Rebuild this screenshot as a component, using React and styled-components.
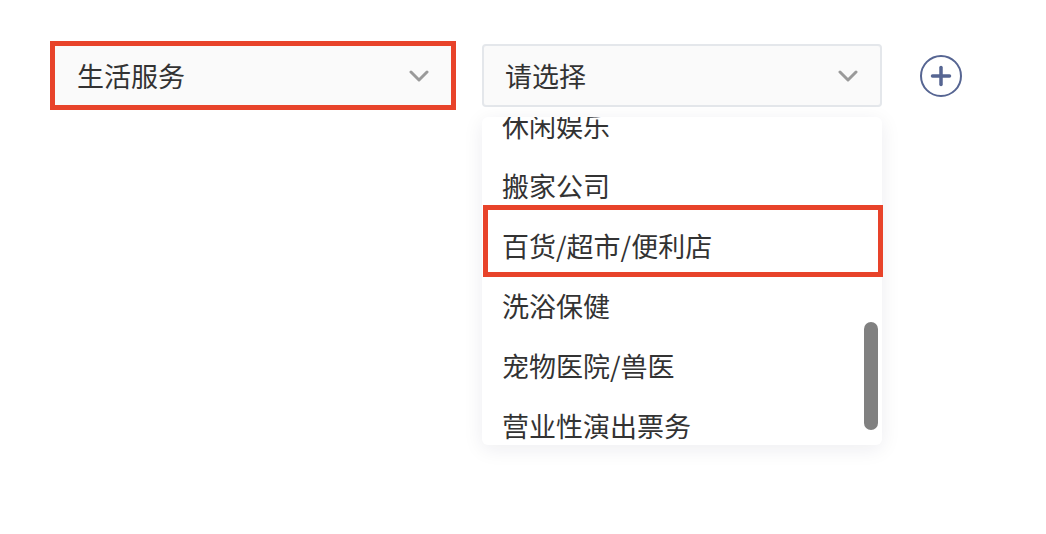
import React, { useLayoutEffect, useRef, useState } from 'react'
import styled, { createGlobalStyle } from 'styled-components'

const FONT = '"Noto Sans CJK SC", "Noto Sans", sans-serif'

const subCategories = [
  '家政服务',
  '维修服务',
  '美容美发',
  '婚庆服务',
  '摄影冲印',
  '洗衣/干洗',
  '快递物流',
  '汽车服务',
  '教育培训',
  '房产中介',
  '休闲娱乐',
  '搬家公司',
  '百货/超市/便利店',
  '洗浴保健',
  '宠物医院/兽医',
  '营业性演出票务'
]

const Chevron = () => (
  <svg width='20' height='12' viewBox='0 0 20 12' aria-hidden='true'>
    <polyline
      points='2,2 10,10 18,2'
      fill='none'
      stroke='#9a9a9a'
      strokeWidth='3'
      strokeLinecap='round'
      strokeLinejoin='round'
    />
  </svg>
)

const PlusCircle = () => (
  <svg width='44' height='44' viewBox='0 0 44 44' aria-hidden='true'>
    <circle cx='22' cy='22' r='20' fill='none' stroke='#566592' strokeWidth='2' />
    <line x1='13.5' y1='22' x2='30.5' y2='22' stroke='#566592' strokeWidth='3.5' strokeLinecap='round' />
    <line x1='22' y1='13.5' x2='22' y2='30.5' stroke='#566592' strokeWidth='3.5' strokeLinecap='round' />
  </svg>
)

const App = () => {
  const listRef = useRef(null)
  const [thumb, setThumb] = useState({ top: 0, height: 0 })

  useLayoutEffect(() => {
    const list = listRef.current
    if (!list) return
    list.scrollTop = 622
    const { scrollTop, scrollHeight, clientHeight } = list
    const height = (clientHeight / scrollHeight) * clientHeight
    const range = scrollHeight - clientHeight
    const top = range > 0 ? (scrollTop / range) * (clientHeight - height) : 0
    setThumb({ top, height })
  }, [])

  return (
    <>
      <GlobalStyle />
      <Page>
        <Row>
          <SelectBox $marked>
            <ValueText>生活服务</ValueText>
            <Chevron />
          </SelectBox>
          <Column>
            <SelectBox>
              <ValueText>请选择</ValueText>
              <Chevron />
            </SelectBox>
            <Dropdown>
              <OptionList ref={listRef}>
                {subCategories.map((name) => (
                  <OptionItem key={name}>{name}</OptionItem>
                ))}
              </OptionList>
              <MarkBox />
              <ScrollThumb style={{ top: thumb.top, height: thumb.height }} />
            </Dropdown>
          </Column>
          <AddButton type='button' aria-label='添加'>
            <PlusCircle />
          </AddButton>
        </Row>
      </Page>
    </>
  )
}

const GlobalStyle = createGlobalStyle`
  html, body {
    margin: 0;
    padding: 0;
    background: #ffffff;
  }
  body {
    font-family: ${FONT};
    color: #333333;
  }
`

const Page = styled.div`
  padding: 44px 0 0 53px;
  min-height: 534px;
  box-sizing: border-box;
`

const Row = styled.div`
  display: flex;
  align-items: flex-start;
`

const Column = styled.div`
  display: flex;
  flex-direction: column;
  gap: 10px;
  margin-left: 29px;
`

const SelectBox = styled.div`
  width: 400px;
  height: 63px;
  box-sizing: border-box;
  display: flex;
  align-items: center;
  justify-content: space-between;
  padding: 0 22px 0 21px;
  background: #fafafa;
  border: 2px solid #e4e7eb;
  border-radius: 4px;
  ${({ $marked }) =>
    $marked &&
    `
    outline: 5px solid #e8432a;
    outline-offset: -2px;
    border-radius: 0;
    padding-left: 22px;
  `}
`

const ValueText = styled.span`
  font-size: 27px;
  line-height: 1;
  color: #333333;
`

const Dropdown = styled.div`
  position: relative;
  width: 400px;
  height: 328px;
  background: #ffffff;
  border-radius: 6px;
  box-shadow: 0 4px 20px rgba(20, 30, 60, 0.08);
`

const OptionList = styled.ul`
  list-style: none;
  margin: 0;
  padding: 0 0 34px 0;
  height: 100%;
  box-sizing: border-box;
  overflow: hidden;
  border-radius: 6px;
`

const OptionItem = styled.li`
  height: 60px;
  display: flex;
  align-items: center;
  padding-left: 20px;
  font-size: 27px;
  color: #333333;
  white-space: nowrap;
`

const MarkBox = styled.div`
  position: absolute;
  top: 88px;
  left: 1px;
  width: 400px;
  height: 72px;
  box-sizing: border-box;
  border: 5px solid #e8432a;
  pointer-events: none;
`

const ScrollThumb = styled.div`
  position: absolute;
  right: 4px;
  width: 14px;
  background: #808080;
  border-radius: 7px;
`

const AddButton = styled.button`
  margin: 10px 0 0 37px;
  padding: 0;
  border: none;
  background: none;
  display: flex;
  cursor: pointer;
`

export default App
